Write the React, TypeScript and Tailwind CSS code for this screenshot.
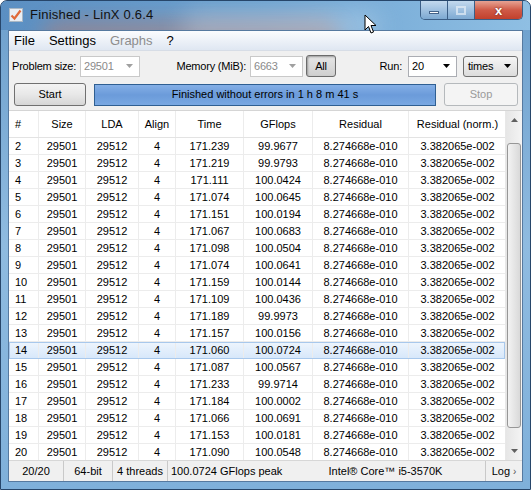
import React from 'react';

const ROWS: [number, string, string][] = [
  [2, '171.239', '99.9677'],
  [3, '171.219', '99.9793'],
  [4, '171.111', '100.0424'],
  [5, '171.074', '100.0645'],
  [6, '171.151', '100.0194'],
  [7, '171.067', '100.0683'],
  [8, '171.098', '100.0504'],
  [9, '171.074', '100.0641'],
  [10, '171.159', '100.0144'],
  [11, '171.109', '100.0436'],
  [12, '171.189', '99.9973'],
  [13, '171.157', '100.0156'],
  [14, '171.060', '100.0724'],
  [15, '171.087', '100.0567'],
  [16, '171.233', '99.9714'],
  [17, '171.184', '100.0002'],
  [18, '171.066', '100.0691'],
  [19, '171.153', '100.0181'],
  [20, '171.090', '100.0548'],
];

const SELECTED = 14;

function Arrow({ color = '#000' }: { color?: string }) {
  return (
    <svg width="7" height="4" viewBox="0 0 7 4">
      <path d="M0 0 H7 L3.5 4 Z" fill={color} />
    </svg>
  );
}

function Combo({ value, disabled, w }: { value: string; disabled?: boolean; w: string }) {
  return (
    <div
      className={`${w} shrink-0 h-[21px] flex items-center justify-between pl-[3px] pr-[6px] bg-white border ${
        disabled ? 'border-[#c9c9c9] text-[#8a8a8a]' : 'border-[#abadb3] text-black'
      }`}
    >
      <span>{value}</span>
      <Arrow color={disabled ? '#a0a0a0' : '#000'} />
    </div>
  );
}

function Cell({ w, children, left, last }: { w: string; children: React.ReactNode; left?: boolean; last?: boolean }) {
  return (
    <div
      className={`${w} shrink-0 h-full flex items-center ${left ? 'justify-start pl-[6px]' : 'justify-center'} ${
        last ? '' : 'border-r border-[#ececec]'
      }`}
    >
      {children}
    </div>
  );
}

export default function App() {
  return (
    <div
      className="relative w-[531px] h-[490px] overflow-hidden whitespace-nowrap rounded-t-[7px] border border-[#27466a] bg-gradient-to-b from-[#6d9fcc] via-[#8fbbe0] to-[#7fb0da] flex flex-col text-[11px] text-black"
      style={{ fontFamily: '"Liberation Sans", Arial, sans-serif' }}
    >
      {/* title bar */}
      <div className="relative h-[29px] shrink-0 flex items-start overflow-hidden bg-gradient-to-r from-[#5b8fc2] via-[#6da3d2] to-[#8fbfe3]">
        <div className="absolute left-[40px] top-[18px] w-[300px] h-[40px] rounded-full bg-[#c9775d] opacity-40 blur-[10px]" />
        <div className="absolute left-[180px] top-[10px] w-[200px] h-[30px] rounded-full bg-[#e6eef5] opacity-30 blur-[12px]" />
        <div className="relative flex items-center h-[27px] pl-[8px] gap-[7px]">
          <svg width="14" height="14" viewBox="0 0 14 14">
            <rect x="0.5" y="0.5" width="13" height="13" fill="#e9eef3" stroke="#a9b7c4" />
            <path d="M2.5 7.5 L5.5 10.5 L11.5 2.5" fill="none" stroke="#e06a3a" strokeWidth="2.2" />
          </svg>
          <span className="text-[13px] text-[#111] tracking-[0.2px]">Finished - LinX 0.6.4</span>
        </div>
        <div className="absolute right-[7px] top-0 flex h-[19px] rounded-b-[5px] border border-t-0 border-[#3b5e86] overflow-hidden">
          <div className="w-[27px] flex items-center justify-center bg-gradient-to-b from-[#c3d9ee] to-[#7da9d2] border-r border-[#3b5e86]">
            <div className="w-[10px] h-[3px] bg-white border border-[#44638a] mt-[5px]" />
          </div>
          <div className="w-[27px] flex items-center justify-center bg-gradient-to-b from-[#c3d9ee] to-[#7da9d2] border-r border-[#3b5e86]">
            <div className="w-[10px] h-[9px] border-[2px] border-[#e6eef7] opacity-70" />
          </div>
          <div className="w-[47px] flex items-center justify-center bg-gradient-to-b from-[#e5a293] via-[#cf5a47] to-[#c2402c]">
            <span className="text-white font-bold text-[13px] leading-none" style={{ textShadow: '0 0 2px #5b1a10' }}>
              x
            </span>
          </div>
        </div>
      </div>

      {/* client */}
      <div className="flex-1 mx-[7px] mb-[7px] flex flex-col bg-[#f0f0f0] border border-[#56799f] min-h-0">
        {/* menu */}
        <div className="h-[20px] shrink-0 flex items-center gap-[14px] pl-[5px] text-[13px] bg-gradient-to-b from-[#fbfcfe] to-[#dfe7f2] border-b border-[#d7dde6]">
          <span>File</span>
          <span>Settings</span>
          <span className="text-[#8d8d8d]">Graphs</span>
          <span>?</span>
        </div>

        {/* row 1 */}
        <div className="h-[30px] shrink-0 flex items-center pl-[3px] tracking-[-0.2px]">
          <span className="w-[68px] shrink-0">Problem size:</span>
          <Combo value="29501" disabled w="w-[60px]" />
          <span className="w-[106px] shrink-0 text-right">Memory (MiB):</span>
          <div className="w-[4px] shrink-0" />
          <Combo value="6663" disabled w="w-[53px]" />
          <div className="shrink-0 ml-[3px] w-[30px] h-[22px] flex items-center justify-center rounded-[3px] border border-[#6b6b6b] bg-gradient-to-b from-[#e6e6e6] to-[#cfcfcf] shadow-[inset_1px_1px_2px_#9a9a9a]">
            All
          </div>
          <span className="w-[66px] shrink-0 text-right">Run:</span>
          <Combo value="20" w="w-[49px] ml-[6px]" />
          <div className="shrink-0 ml-[6px] w-[55px] h-[21px] flex items-center justify-between pl-[4px] pr-[6px] rounded-[3px] border border-[#707070] bg-gradient-to-b from-[#f5f5f5] to-[#dcdcdc]">
            <span>times</span>
            <Arrow />
          </div>
        </div>

        {/* row 2 */}
        <div className="h-[27px] shrink-0 flex items-center pl-[5px] pr-[4px]">
          <div className="w-[72px] h-[23px] flex items-center justify-center rounded-[3px] border border-[#707070] bg-gradient-to-b from-[#f3f3f3] via-[#e8e8e8] to-[#d6d6d6]">
            Start
          </div>
          <div className="ml-[8px] w-[342px] h-[22px] flex items-center justify-center border border-[#2f5f92] bg-gradient-to-b from-[#84afe6] via-[#6b9bda] to-[#79a8e2]">
            Finished without errors in 1 h 8 m 41 s
          </div>
          <div className="ml-[8px] w-[74px] h-[23px] flex items-center justify-center rounded-[3px] border border-[#b5b9bc] bg-[#f4f4f4] text-[#9a9a9a]">
            Stop
          </div>
        </div>

        {/* table */}
        <div className="mt-[2px] flex-1 min-h-0 flex bg-white border-t border-[#d5d5d5] overflow-hidden">
          <div className="flex-1 min-w-0 flex flex-col">
            <div className="h-[27px] shrink-0 flex border-b border-[#e3e3e3]">
              <Cell w="w-[30px]" left>#</Cell>
              <Cell w="w-[47px]">Size</Cell>
              <Cell w="w-[53px]">LDA</Cell>
              <Cell w="w-[37px]">Align</Cell>
              <Cell w="w-[68px]">Time</Cell>
              <Cell w="w-[69px]">GFlops</Cell>
              <Cell w="w-[96px]">Residual</Cell>
              <Cell w="w-[97px]" last>Residual (norm.)</Cell>
            </div>
            {ROWS.map(([n, time, gf]) => (
              <div
                key={n}
                className={`h-[17px] shrink-0 flex ${
                  n === SELECTED
                    ? 'bg-gradient-to-b from-[#eef5fd] to-[#d6e7fa] outline outline-1 -outline-offset-1 outline-[#a8c8ec]'
                    : 'border-b border-[#ececec]'
                }`}
              >
                <Cell w="w-[30px]" left>{n}</Cell>
                <Cell w="w-[47px]">29501</Cell>
                <Cell w="w-[53px]">29512</Cell>
                <Cell w="w-[37px]">4</Cell>
                <Cell w="w-[68px]">{time}</Cell>
                <Cell w="w-[69px]">{gf}</Cell>
                <Cell w="w-[96px]">8.274668e-010</Cell>
                <Cell w="w-[97px]" last>3.382065e-002</Cell>
              </div>
            ))}
          </div>
          {/* scrollbar */}
          <div className="w-[17px] shrink-0 flex flex-col bg-gradient-to-r from-[#e6e6e6] to-[#f4f4f4] border-l border-[#e8e8e8]">
            <div className="h-[18px] flex items-center justify-center">
              <svg width="7" height="4" viewBox="0 0 7 4">
                <path d="M0 4 H7 L3.5 0 Z" fill="#606060" />
              </svg>
            </div>
            <div className="flex-1 mx-[1px] my-[14px] rounded-[3px] border border-[#979797] bg-gradient-to-r from-[#f3f3f3] to-[#d9d9d9]" />
            <div className="h-[18px] flex items-center justify-center">
              <Arrow color="#606060" />
            </div>
          </div>
        </div>

        {/* status bar */}
        <div className="h-[21px] shrink-0 flex items-center bg-[#f0f0f0] border-t border-[#d7d7d7]">
          <div className="w-[55px] shrink-0 h-full flex items-center justify-center border-r border-[#c9c9c9]">20/20</div>
          <div className="w-[49px] shrink-0 h-full flex items-center justify-center border-r border-[#c9c9c9]">64-bit</div>
          <div className="w-[55px] shrink-0 h-full flex items-center justify-center border-r border-[#c9c9c9]">4 threads</div>
          <div className="w-[118px] shrink-0 h-full flex items-center pl-[3px]">100.0724 GFlops peak</div>
          <div className="flex-1 h-full flex items-center justify-center border-r border-[#c9c9c9]">Intel® Core™ i5-3570K</div>
          <div className="w-[36px] shrink-0 h-full flex items-center justify-center gap-[3px]">
            Log <span className="text-[10px] text-[#555]">›</span>
          </div>
        </div>
      </div>

      {/* mouse cursor */}
      <svg className="absolute left-[363px] top-[13px]" width="13" height="21" viewBox="0 0 13 21">
        <path d="M1 1 V16 L4.5 12.5 L7 19 L9.5 18 L7 11.5 H12 Z" fill="#fff" stroke="#000" strokeWidth="1" strokeLinejoin="round" />
      </svg>
    </div>
  );
}
